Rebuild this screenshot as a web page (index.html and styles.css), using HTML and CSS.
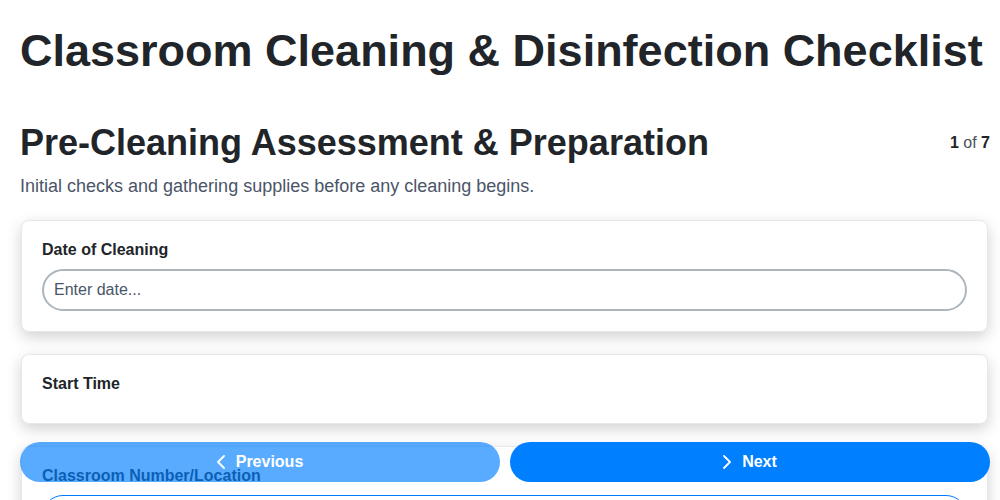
FILE: index.html
```html
<!DOCTYPE html>
<html lang="en">
<head>
<meta charset="utf-8">
<title>Classroom Cleaning &amp; Disinfection Checklist</title>
<link rel="stylesheet" href="styles.css">
</head>
<body>
<div class="page">
  <h1 class="title">Classroom Cleaning &amp; Disinfection Checklist</h1>
  <div class="section-head">
    <h2 class="section-title">Pre-Cleaning Assessment &amp; Preparation</h2>
    <div class="step"><b>1</b> of <b>7</b></div>
  </div>
  <p class="section-desc">Initial checks and gathering supplies before any cleaning begins.</p>

  <div class="card">
    <label class="field-label">Date of Cleaning</label>
    <input class="field-input" type="text" placeholder="Enter date...">
  </div>
  <div class="card">
    <label class="field-label">Start Time</label>
  </div>
  <div class="card">
    <label class="field-label">Classroom Number/Location</label>
    <input class="field-input focused" type="text" placeholder="Enter location...">
  </div>
</div>

<nav class="nav">
  <button class="nav-btn disabled" type="button">
    <svg class="chev" viewBox="0 0 8 14" width="8" height="14"><polyline points="7 1 1 7 7 13" fill="none" stroke="#fff" stroke-width="1.8" stroke-linecap="round" stroke-linejoin="round"/></svg>
    <span>Previous</span>
  </button>
  <button class="nav-btn" type="button">
    <svg class="chev" viewBox="0 0 8 14" width="8" height="14"><polyline points="1 1 7 7 1 13" fill="none" stroke="#fff" stroke-width="1.8" stroke-linecap="round" stroke-linejoin="round"/></svg>
    <span>Next</span>
  </button>
</nav>
</body>
</html>
```

FILE: styles.css
```css
* { box-sizing: border-box; }
html, body { margin: 0; padding: 0; background: #fff; }
body {
  font-family: "Liberation Sans", Arial, sans-serif;
  color: #212529;
}
.page {
  padding: 24px 10px 80px 20px;
}
.title {
  margin: 0;
  font-size: 45px;
  line-height: 54px;
  font-weight: 700;
  color: #212529;
}
.section-head {
  display: flex;
  justify-content: space-between;
  align-items: center;
  margin-top: 43px;
}
.section-title {
  margin: 0;
  font-size: 36px;
  line-height: 43px;
  font-weight: 700;
  color: #212529;
}
.step {
  font-size: 16px;
  color: #495057;
}
.step b { color: #212529; }
.section-desc {
  margin: 9px 0 0;
  font-size: 18px;
  line-height: 27px;
  color: #4a5568;
}
.card {
  margin: 20px 2px 22px 1px;
  padding: 20px;
  background: #fff;
  border: 1px solid #e6e8ec;
  border-radius: 8px;
  box-shadow: 0 5px 15px rgba(0, 0, 0, 0.18);
}
.card + .card { margin-top: 0; }
.field-label {
  display: block;
  font-size: 16px;
  font-weight: 700;
  color: #212529;
  margin-bottom: 10px;
}
.field-input {
  display: block;
  width: 100%;
  height: 42px;
  padding: 0 10px;
  border: 2px solid #adb5bd;
  border-radius: 21px;
  font-family: "Liberation Sans", Arial, sans-serif;
  font-size: 16px;
  color: #212529;
  background: #fff;
  outline: none;
}
.field-input::placeholder { color: #4a5568; }
.field-input.focused { border: 1px solid #007bff; }
.nav {
  position: fixed;
  left: 20px;
  right: 10px;
  bottom: 18px;
  display: flex;
  gap: 10px;
  z-index: 10;
}
.nav-btn {
  flex: 1;
  height: 40px;
  display: flex;
  align-items: center;
  justify-content: center;
  gap: 11px;
  border: none;
  border-radius: 20px;
  background: #007fff;
  color: #fff;
  font-family: "Liberation Sans", Arial, sans-serif;
  font-size: 16px;
  font-weight: 700;
  padding: 0;
}
.nav-btn.disabled { opacity: 0.65; }
.chev { display: block; }
```
